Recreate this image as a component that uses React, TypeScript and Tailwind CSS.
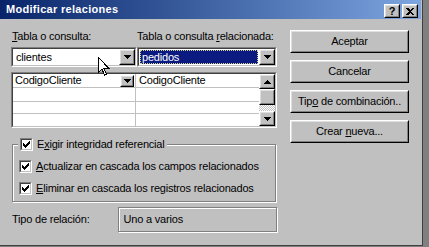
import type { ReactNode } from "react";

function Sunken({ className = "", inner = "bg-white", children }: { className?: string; inner?: string; children?: ReactNode }) {
  return (
    <div className={`border border-t-[#808080] border-l-[#808080] border-b-white border-r-white ${className}`}>
      <div className={`h-full border border-t-[#404040] border-l-[#404040] border-b-[#c0c0c0] border-r-[#c0c0c0] ${inner}`}>
        {children}
      </div>
    </div>
  );
}

function Raised({ className = "", children }: { className?: string; children?: ReactNode }) {
  return (
    <div className={`bg-[#c0c0c0] border border-t-white border-l-white border-b-black border-r-black ${className}`}>
      <div className="h-full border border-t-[#dfdfdf] border-l-[#dfdfdf] border-b-[#808080] border-r-[#808080] flex items-center justify-center">
        {children}
      </div>
    </div>
  );
}

function Arrow({ up = false }: { up?: boolean }) {
  return (
    <svg width="7" height="4" viewBox="0 0 7 4" shapeRendering="crispEdges">
      <path d={up ? "M3 0h1v1h1v1h1v1h1v1H0V3h1V2h1V1h1z" : "M0 0h7v1H6v1H5v1H4v1H3V3H2V2H1V1H0z"} fill="#000" />
    </svg>
  );
}

function Check() {
  return (
    <Sunken className="w-[13px] h-[13px] shrink-0">
      <svg width="9" height="9" viewBox="0 0 9 9" shapeRendering="crispEdges">
        <path d="M1 3h1v1h1v1h1V4h1V3h1V2h1V1h1v3H7v1H6v1H5v1H4v1H3V7H2V6H1z" fill="#000" />
      </svg>
    </Sunken>
  );
}

function CheckRow({ children }: { children: ReactNode }) {
  return (
    <div className="flex items-center h-[13px]">
      <Check />
      <span className="ml-[4px] leading-[13px] whitespace-nowrap">{children}</span>
    </div>
  );
}

export default function App() {
  return (
    <div className="relative w-[429px] h-[247px] overflow-hidden bg-[#808080] font-['Liberation_Sans',Arial,sans-serif] text-[11px] tracking-[-0.2px] text-black">
      <div className="w-[423px] h-[246px] bg-[#c0c0c0] border-r border-b border-[#404040]">
        {/* title bar */}
        <div className="h-[19px] mr-[1px] flex items-start pt-[3px] pl-[6px] pr-[3px] bg-gradient-to-r from-[#0a246a] to-[#7ea6e0]">
          <span className="flex-1 text-white font-bold leading-[13px] tracking-[0.3px]">Modificar relaciones</span>
          <Raised className="w-[16px] h-[14px] mt-[1px]">
            <span className="font-bold text-[11px] leading-[10px] tracking-normal">?</span>
          </Raised>
          <Raised className="w-[16px] h-[14px] mt-[1px] ml-[2px]">
            <svg width="8" height="7" viewBox="0 0 8 7" shapeRendering="crispEdges">
              <path d="M0 0h2l2 2 2-2h2L5 3.5 8 7H6L4 5 2 7H0l3-3.5z" fill="#000" />
            </svg>
          </Raised>
        </div>

        <div className="flex pl-[11px]">
          {/* left column */}
          <div className="w-[266px] pt-[11px]">
            <div className="flex h-[13px] leading-[13px]">
              <span className="w-[126px] pl-[1px]"><span className="underline">T</span>abla o consulta:</span>
              <span>Tabla o consulta <span className="underline">r</span>elacionada:</span>
            </div>

            <div className="flex mt-[4px]">
              <Sunken className="w-[126px] h-[20px]">
                <div className="flex h-full">
                  <span className="flex-1 pl-[3px] leading-[16px]">clientes</span>
                  <Raised className="w-[16px] h-[16px]"><Arrow /></Raised>
                </div>
              </Sunken>
              <Sunken className="w-[140px] h-[20px]">
                <div className="flex h-full">
                  <div className="flex-1 m-[1px] bg-[#0a1a80] border border-dotted border-[#d8d890] text-white leading-[12px] pl-[1px]">pedidos</div>
                  <Raised className="w-[16px] h-[16px]"><Arrow /></Raised>
                </div>
              </Sunken>
            </div>

            {/* grid */}
            <Sunken className="mt-[5px] h-[56px]">
              <div className="flex h-full">
                <div className="flex-1 flex flex-col">
                  <div className="flex h-[14px] border-b border-[#c0c0c0]">
                    <div className="w-[123px] border-r border-[#c0c0c0] flex items-center">
                      <span className="flex-1 pl-[2px] leading-[13px]">CodigoCliente</span>
                      <Raised className="w-[14px] h-[12px] mr-[1px]"><Arrow /></Raised>
                    </div>
                    <div className="flex-1 pl-[3px] leading-[13px]">CodigoCliente</div>
                  </div>
                  <div className="flex h-[14px] border-b border-[#c0c0c0]">
                    <div className="w-[123px] border-r border-[#c0c0c0]" />
                    <div className="flex-1" />
                  </div>
                  <div className="flex h-[12px] border-b border-[#c0c0c0]">
                    <div className="w-[123px] border-r border-[#c0c0c0]" />
                    <div className="flex-1" />
                  </div>
                  <div className="flex flex-1">
                    <div className="w-[123px] border-r border-[#c0c0c0]" />
                    <div className="flex-1" />
                  </div>
                </div>
                <div className="w-[16px] flex flex-col">
                  <Raised className="h-[15px]"><Arrow up /></Raised>
                  <Raised className="h-[16px]" />
                  <div className="flex-1 bg-[repeating-conic-gradient(#c0c0c0_0%_25%,#ffffff_0%_50%)] bg-size-[2px_2px]" />
                  <Raised className="h-[15px]"><Arrow /></Raised>
                </div>
              </div>
            </Sunken>

            {/* group */}
            <fieldset className="mt-[10px] ml-[1px] w-[264px] border border-[#808080] shadow-[inset_1px_1px_0_#fff,1px_1px_0_#fff] pb-[6px]">
              <legend className="ml-[5px] px-[2px] bg-[#c0c0c0]">
                <CheckRow>E<span className="underline">x</span>igir integridad referencial</CheckRow>
              </legend>
              <div className="pl-[6px] mt-[9px]">
                <CheckRow><span className="underline">A</span>ctualizar en cascada los campos relacionados</CheckRow>
              </div>
              <div className="pl-[6px] mt-[9px]">
                <CheckRow><span className="underline">E</span>liminar en cascada los registros relacionados</CheckRow>
              </div>
            </fieldset>

            <div className="flex items-center mt-[5px]">
              <span className="w-[107px] pl-[1px]">Tipo de relación:</span>
              <div className="w-[160px] h-[25px] flex items-center pl-[5px] border border-[#808080] shadow-[inset_1px_1px_0_#fff,1px_1px_0_#fff]">
                Uno a varios
              </div>
            </div>
          </div>

          {/* right column */}
          <div className="ml-[13px] w-[119px] pt-[11px] flex flex-col gap-[7px]">
            <Raised className="h-[23px]">Aceptar</Raised>
            <Raised className="h-[23px]">Cancelar</Raised>
            <Raised className="h-[23px]"><span>Tip<span className="underline">o</span> de combinación..</span></Raised>
            <Raised className="h-[23px]"><span>Crear <span className="underline">n</span>ueva...</span></Raised>
          </div>
        </div>
      </div>

      {/* mouse pointer */}
      <svg className="absolute left-[98px] top-[57px]" width="12" height="19" viewBox="0 0 12 19" shapeRendering="crispEdges">
        <path d="M0.5 0.5v15l3.5-3.5 2.5 6 2-1-2.5-5.5h5z" fill="#fff" stroke="#000" strokeWidth="1" />
      </svg>
    </div>
  );
}
